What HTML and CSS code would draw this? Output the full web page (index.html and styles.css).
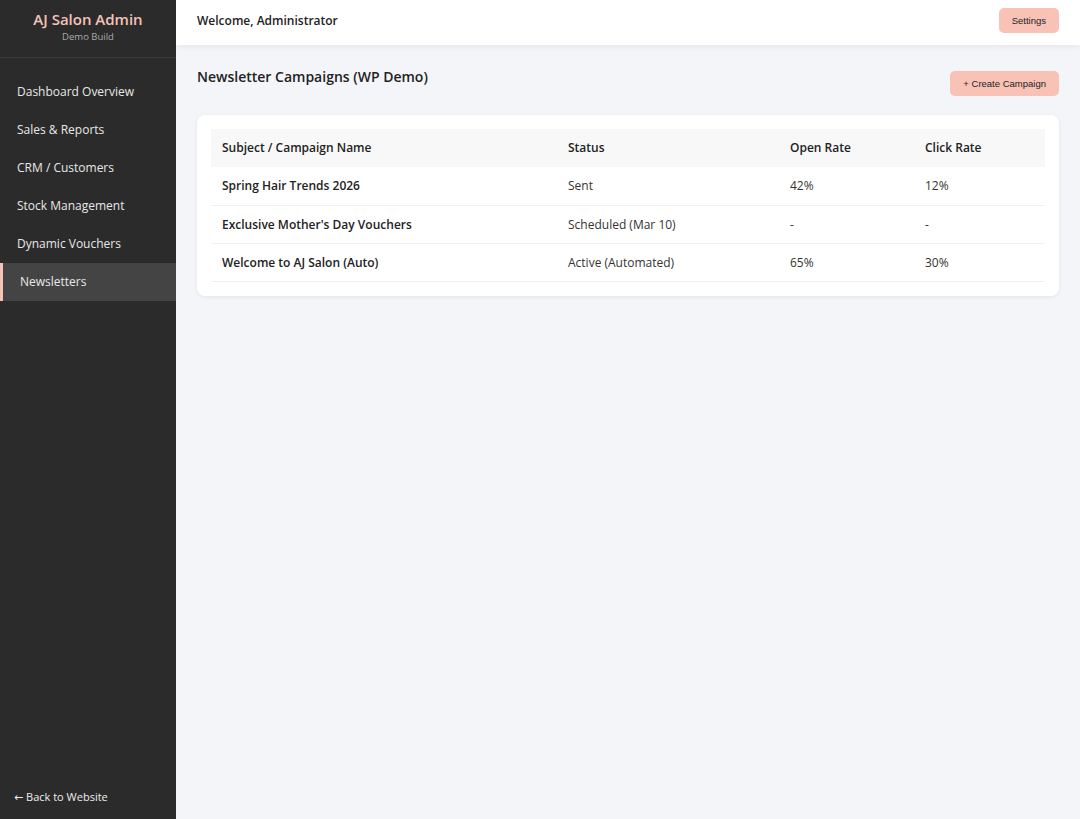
FILE: index.html
```html
<!DOCTYPE html>
<html lang="en">
<head>
    <meta charset="UTF-8">
    <meta name="viewport" content="width=device-width, initial-scale=1.0">
    <title>AJ Salon Admin</title>
    <link rel="stylesheet" href="styles.css">
</head>
<body>
    <aside class="sidebar">
        <div class="brand">
            <h1>AJ Salon Admin</h1>
            <p>Demo Build</p>
        </div>
        <nav class="nav">
            <a href="#">Dashboard Overview</a>
            <a href="#">Sales &amp; Reports</a>
            <a href="#">CRM / Customers</a>
            <a href="#">Stock Management</a>
            <a href="#">Dynamic Vouchers</a>
            <a href="#" class="active">Newsletters</a>
        </nav>
        <a href="#" class="back-link">&larr; Back to Website</a>
    </aside>
    <div class="main">
        <header class="topbar">
            <span class="welcome">Welcome, Administrator</span>
            <button class="btn">Settings</button>
        </header>
        <section class="content">
            <div class="page-head">
                <h2>Newsletter Campaigns (WP Demo)</h2>
                <button class="btn btn-create">+ Create Campaign</button>
            </div>
            <div class="card">
                <table>
                    <thead>
                        <tr>
                            <th class="col-name">Subject / Campaign Name</th>
                            <th class="col-status">Status</th>
                            <th class="col-open">Open Rate</th>
                            <th>Click Rate</th>
                        </tr>
                    </thead>
                    <tbody>
                        <tr>
                            <td class="name">Spring Hair Trends 2026</td>
                            <td>Sent</td>
                            <td>42%</td>
                            <td>12%</td>
                        </tr>
                        <tr>
                            <td class="name">Exclusive Mother's Day Vouchers</td>
                            <td>Scheduled (Mar 10)</td>
                            <td>-</td>
                            <td>-</td>
                        </tr>
                        <tr>
                            <td class="name">Welcome to AJ Salon (Auto)</td>
                            <td>Active (Automated)</td>
                            <td>65%</td>
                            <td>30%</td>
                        </tr>
                    </tbody>
                </table>
            </div>
        </section>
    </div>
</body>
</html>
```

FILE: styles.css
```css
body {
    font-family: 'Open Sans', 'DejaVu Sans', sans-serif;
    margin: 0;
    padding: 0;
    display: flex;
    height: 819px;
    background-color: #f4f5f8;
    color: #222;
}
.sidebar {
    width: 176px;
    flex-shrink: 0;
    background-color: #2b2b2b;
    display: flex;
    flex-direction: column;
}
.brand {
    text-align: center;
    padding: 9px 0 13px;
    border-bottom: 1px solid #3a3a3a;
}
.brand h1 {
    margin: 0;
    font-size: 15px;
    font-weight: 600;
    color: #f4c3b8;
    line-height: 21px;
}
.brand p {
    margin: 0;
    font-size: 9.5px;
    color: #aaa;
    line-height: 14px;
}
.nav {
    display: flex;
    flex-direction: column;
    padding-top: 15px;
}
.nav a {
    display: block;
    height: 38px;
    line-height: 38px;
    padding-left: 17px;
    font-size: 12px;
    color: #e8e8e8;
    text-decoration: none;
}
.nav a.active {
    background-color: #444;
    border-left: 3px solid #f4c3b8;
    padding-left: 17px;
}
.back-link {
    margin-top: auto;
    padding: 0 0 15px 14px;
    font-size: 11px;
    color: #eee;
    text-decoration: none;
}
.main {
    flex: 1;
    display: flex;
    flex-direction: column;
}
.topbar {
    height: 45px;
    box-sizing: border-box;
    background: white;
    display: flex;
    align-items: center;
    justify-content: space-between;
    padding: 0 21px 4px;
    box-shadow: 0 2px 6px rgba(0, 0, 0, 0.06);
}
.welcome {
    font-size: 12px;
    font-weight: 600;
}
.btn {
    font-family: 'Liberation Sans', Arial, sans-serif;
    font-size: 9.5px;
    background-color: #f9c2b7;
    color: #222;
    border: none;
    border-radius: 5px;
    height: 25px;
    padding: 0 13px;
    cursor: pointer;
}
.content {
    padding: 21px;
}
.page-head {
    display: flex;
    justify-content: space-between;
    align-items: flex-start;
    margin-bottom: 19px;
}
.page-head h2 {
    margin: 0;
    font-size: 14px;
    font-weight: 600;
    line-height: 20px;
    padding-top: 1px;
}
.btn-create {
    margin-top: 5px;
}
.card {
    background: white;
    border-radius: 8px;
    padding: 14px;
    box-shadow: 0 1px 4px rgba(0, 0, 0, 0.07);
}
table {
    width: 100%;
    border-collapse: collapse;
    font-size: 12px;
}
th, td {
    text-align: left;
    height: 38px;
    padding: 0 11px;
    box-sizing: border-box;
}
th {
    background-color: #f8f8f8;
    font-weight: 600;
    padding-bottom: 2px;
}
td {
    border-bottom: 1px solid #f0f0f0;
    color: #333;
}
td.name {
    font-weight: 600;
    color: #222;
}
.col-name {
    width: 346px;
}
.col-status {
    width: 222px;
}
.col-open {
    width: 135px;
}
```
